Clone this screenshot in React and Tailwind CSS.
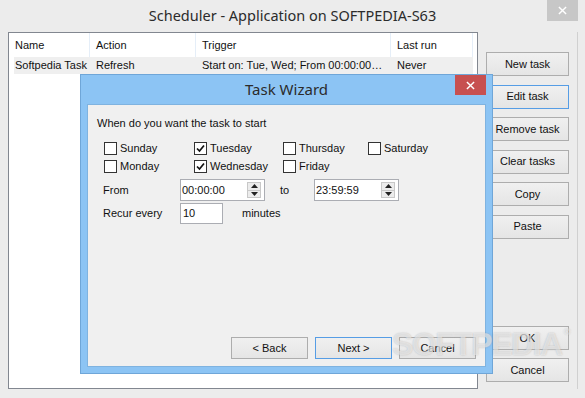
import React from 'react';

const uiFont = "font-['Liberation_Sans',Arial,sans-serif]";
const titleFont = "font-['Noto_Sans','Open_Sans',sans-serif]";

function WinButton({ label, focused, className = '' }) {
  return (
    <div
      className={`flex items-center justify-center border text-[11px] text-[#111] bg-gradient-to-b from-[#f0f0f0] to-[#e5e5e5] ${
        focused ? 'border-[#569de5]' : 'border-[#adadad]'
      } ${className}`}
    >
      {label}
    </div>
  );
}

function CloseX({ size = 10, stroke = 1.6 }) {
  return (
    <svg width={size} height={size} viewBox="0 0 10 10">
      <path d="M1 1L9 9M9 1L1 9" stroke="white" strokeWidth={stroke} />
    </svg>
  );
}

function CheckBox({ label, checked }) {
  return (
    <div className="flex items-center h-[18px]">
      <div className="w-[13px] h-[13px] border border-[#333] bg-white flex items-center justify-center">
        {checked && (
          <svg width="9" height="9" viewBox="0 0 9 9">
            <path d="M1 4.5L3.5 7L8 1.5" stroke="#111" strokeWidth="1.7" fill="none" />
          </svg>
        )}
      </div>
      <span className="ml-[3px]">{label}</span>
    </div>
  );
}

function TimeInput({ value }) {
  return (
    <div className="w-[85px] h-[22px] border border-[#abadb3] bg-white flex items-center pl-[1px] pr-[3px]">
      <span className="flex-1">{value}</span>
      <div className="flex flex-col w-[14px] h-[16px] border border-[#c8c8c8] bg-[#ececec]">
        <div className="flex-1 flex items-center justify-center border-b border-[#c8c8c8]">
          <svg width="7" height="4" viewBox="0 0 7 4"><path d="M3.5 0L7 4H0z" fill="#222" /></svg>
        </div>
        <div className="flex-1 flex items-center justify-center">
          <svg width="7" height="4" viewBox="0 0 7 4"><path d="M0 0H7L3.5 4z" fill="#222" /></svg>
        </div>
      </div>
    </div>
  );
}

const columns = [
  { title: 'Name', w: 'w-[81px]' },
  { title: 'Action', w: 'w-[106px]' },
  { title: 'Trigger', w: 'w-[195px]' },
  { title: 'Last run', w: 'w-[82px]' },
];

export default function App() {
  return (
    <div className={`relative w-[585px] h-[398px] overflow-hidden bg-[#ececec] text-[11px] text-[#111] ${uiFont}`}>
      {/* title bar */}
      <div className="relative h-8 flex items-center justify-center">
        <span className={`text-[14.5px] text-[#2b2b2b] ${titleFont}`}>Scheduler - Application on SOFTPEDIA-S63</span>
        <div className="absolute right-[7px] top-0 w-[31px] h-[21px] bg-[#c7c7c7] flex items-center justify-center">
          <CloseX size={9} />
        </div>
      </div>

      <div className="flex pl-2 pr-[7px] h-[357px]">
        {/* list view */}
        <div className="w-[470px] h-full border border-[#828790] bg-white">
          <div className="flex h-6 items-center">
            {columns.map((c) => (
              <div key={c.title} className={`${c.w} h-full flex items-center pl-[6px] border-r border-[#e5eef8]`}>
                {c.title}
              </div>
            ))}
          </div>
          <div className="flex h-[17px] items-center ml-[5px] w-[459px] bg-[#efefef] whitespace-nowrap">
            <div className="w-[76px] pl-[1px]">Softpedia Task</div>
            <div className="w-[106px] pl-[6px]">Refresh</div>
            <div className="w-[195px] pl-[6px] overflow-hidden">Start on: Tue, Wed; From 00:00:00…</div>
            <div className="w-[82px] pl-[6px]">Never</div>
          </div>
        </div>

        {/* right buttons */}
        <div className="ml-2 w-[83px] flex flex-col justify-between pt-5 pb-[7px]">
          <div className="flex flex-col gap-[8.5px]">
            <WinButton label="New task" className="h-6" />
            <WinButton label="Edit task" focused className="h-6" />
            <WinButton label="Remove task" className="h-6" />
            <WinButton label="Clear tasks" className="h-6" />
            <WinButton label="Copy" className="h-6" />
            <WinButton label="Paste" className="h-6" />
          </div>
          <div className="flex flex-col gap-2">
            <WinButton label="OK" className="h-6" />
            <WinButton label="Cancel" className="h-6" />
          </div>
        </div>
        <div className="ml-auto w-px h-full bg-[#d0d0d0]" />
      </div>

      {/* task wizard dialog */}
      <div className="absolute left-[80px] top-[74px] w-[413px] h-[300px] bg-[#8cc4f4] border border-[#6fa6d8] flex flex-col px-[6px] pb-[6px]">
        <div className="relative h-[29px] flex items-center justify-center">
          <span className={`text-[15px] text-[#2b2b2b] ${titleFont}`}>Task Wizard</span>
          <div className="absolute right-0 top-0 w-[31px] h-[20px] bg-[#c75050] flex items-center justify-center">
            <CloseX size={9} />
          </div>
        </div>
        <div className="flex-1 bg-[#f0f0f0] border border-[#7fb3e0] flex flex-col pl-[9px] pr-[9px] pb-[7px]">
          <div className="mt-[10px] leading-4">When do you want the task to start</div>
          <div className="mt-2 ml-[7px] grid grid-cols-[90px_89px_85px_80px]">
            <CheckBox label="Sunday" />
            <CheckBox label="Tuesday" checked />
            <CheckBox label="Thursday" />
            <CheckBox label="Saturday" />
            <CheckBox label="Monday" />
            <CheckBox label="Wednesday" checked />
            <CheckBox label="Friday" />
          </div>
          <div className="mt-1 ml-[6px] flex items-center">
            <span className="w-[77px]">From</span>
            <TimeInput value="00:00:00" />
            <span className="ml-[15px] w-[34px]">to</span>
            <TimeInput value="23:59:59" />
          </div>
          <div className="mt-[2px] ml-[6px] flex items-center">
            <span className="w-[77px]">Recur every</span>
            <div className="w-[43px] h-[21px] border border-[#abadb3] bg-white flex items-center pl-[2px]">10</div>
            <span className="ml-[19px]">minutes</span>
          </div>
          <div className="mt-auto flex justify-end gap-[7px]">
            <WinButton label="< Back" className="w-[77px] h-[22px]" />
            <WinButton label="Next >" focused className="w-[77px] h-[22px]" />
            <WinButton label="Cancel" className="w-[77px] h-[22px]" />
          </div>
        </div>
      </div>

      {/* watermark */}
      <div className="absolute left-[392px] top-[328px] leading-none text-[32px] font-bold tracking-[-1.5px] text-white/55 pointer-events-none [text-shadow:0_0_1.5px_rgba(110,110,110,0.45)]">
        SOFTPEDIA<span className="ml-[2px] text-[9px] align-top">®</span>
      </div>
    </div>
  );
}
